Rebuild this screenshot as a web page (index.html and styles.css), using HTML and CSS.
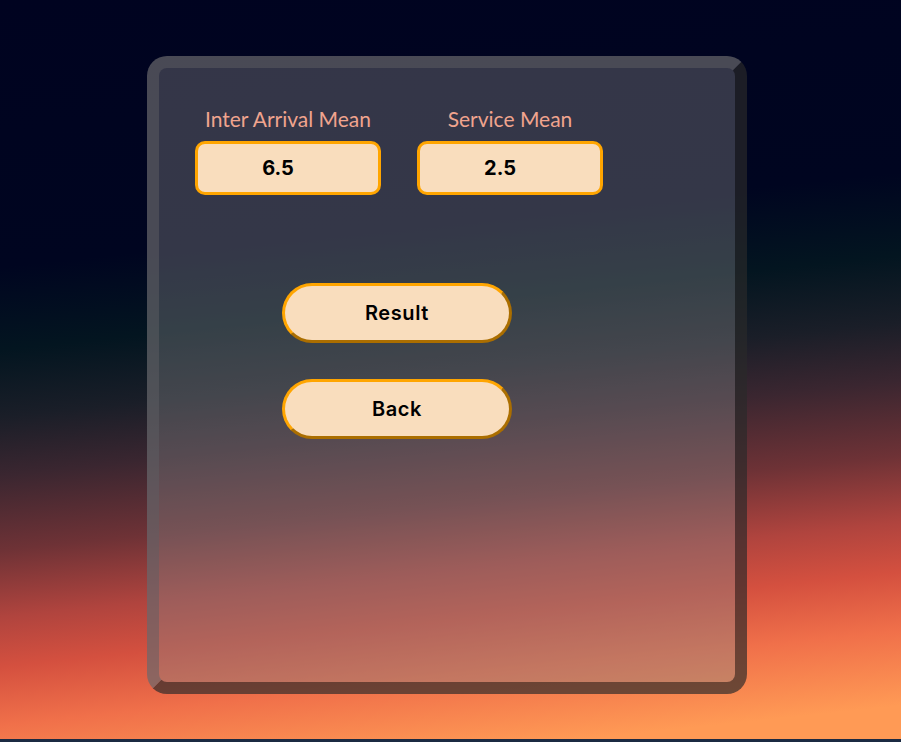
FILE: index.html
```html
<!DOCTYPE html>
<html lang="en">

<head>
    <meta charset="UTF-8">
    <meta name="viewport" content="width=device-width, initial-scale=1.0">
    <title>Queue Simulation</title>
    <link rel="stylesheet" href="styles.css">
</head>

<body>

    <div class="card">
        <div class="panel">
            <div class="fields">
                <div class="field">
                    <label for="arrival">Inter Arrival Mean</label>
                    <input type="text" id="arrival" class="num" value="6.5">
                </div>
                <div class="field">
                    <label for="service">Service Mean</label>
                    <input type="text" id="service" class="num" value="2.5">
                </div>
            </div>
            <div class="actions">
                <button class="btn" id="result-btn">Result</button>
                <button class="btn" id="back-btn">Back</button>
            </div>
        </div>
    </div>

</body>

</html>
```

FILE: styles.css
```css
html {
    background-color: #1b2a42;
}

body {
    margin: 0;
    height: 739px;
    font-family: Inter, "Noto Sans", sans-serif;
    background: linear-gradient(174deg,
            #000320 0%,
            #000520 32%,
            #031520 42%,
            #1a1e28 50%,
            #3a2630 57%,
            #6e3236 66%,
            #b0443e 74%,
            #d4503f 80%,
            #f0704a 87%,
            #ff9a55 96%);
}

.card {
    box-sizing: border-box;
    width: 600px;
    height: 638px;
    margin: 0 0 0 147px;
    position: relative;
    top: 56px;
    padding: 38px 36px 0;
    border: 12px solid;
    border-color: rgba(95, 95, 100, 0.5) rgba(0, 0, 0, 0.46) rgba(0, 0, 0, 0.46) rgba(95, 95, 100, 0.5);
    border-radius: 20px;
    background-color: rgba(130, 130, 132, 0.4);
}

.panel {
    width: fit-content;
}

.fields {
    display: flex;
    gap: 36px;
}

.field {
    display: flex;
    flex-direction: column;
    align-items: center;
    gap: 10px;
}

.field label {
    font-family: Lato, "Noto Sans", sans-serif;
    font-size: 21px;
    color: #f0a48e;
}

.num {
    box-sizing: border-box;
    width: 186px;
    height: 54px;
    padding: 0 20px 0 0;
    border: 3px solid #ffa500;
    border-radius: 10px;
    background-color: #f9ddbd;
    text-align: center;
    font-family: Inter, sans-serif;
    font-size: 20px;
    font-weight: 700;
    color: black;
    outline: none;
}

.actions {
    display: flex;
    flex-direction: column;
    align-items: center;
    gap: 36px;
    margin: 88px 4px 0 0;
}

.btn {
    box-sizing: border-box;
    width: 230px;
    height: 60px;
    border: 3px outset #ffa500;
    border-radius: 30px;
    background-color: #f9ddbd;
    font-family: Inter, sans-serif;
    font-size: 20px;
    font-weight: 600;
    letter-spacing: 0.6px;
    color: black;
    cursor: pointer;
}
```
